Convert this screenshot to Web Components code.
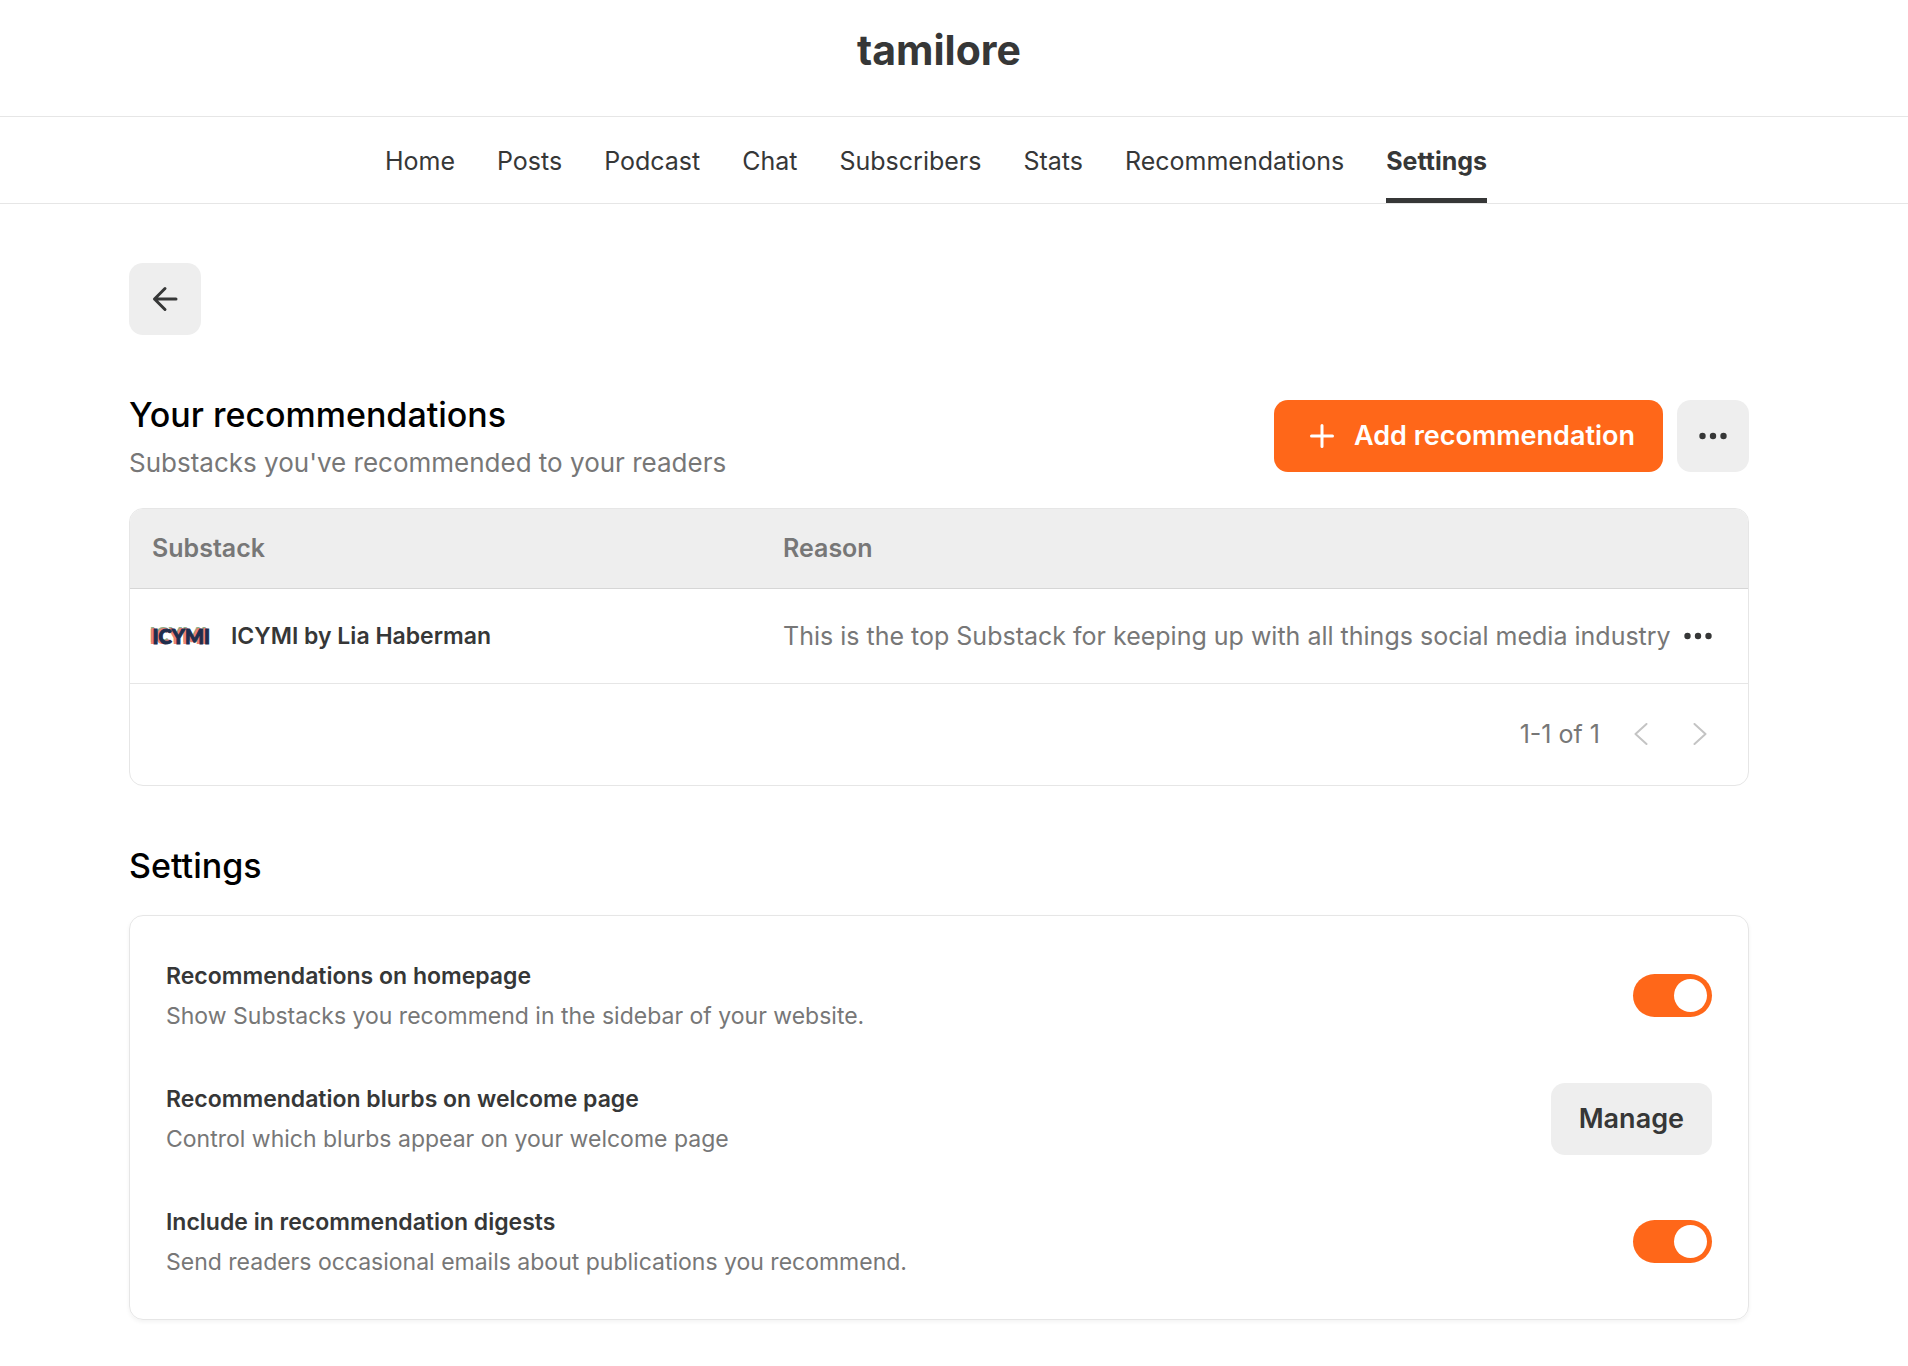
<!DOCTYPE html>
<html lang="en">
<head>
<meta charset="utf-8">
<title>Recommendations - tamilore</title>
<style>
  :root {
    --accent: #ff6719;
    --ink: #363737;
    --muted: #777777;
    --surface: #eeeeee;
    --line: #e6e6e6;
    --radius: 14px;
    --gutter: 30px;
  }
  html { background: #ffffff; }
  body {
    margin: 0;
    font-family: Inter, "Liberation Sans", sans-serif;
    font-size: 25px;
    line-height: 32px;
    color: var(--ink);
  }
</style>
</head>
<body>
<app-page>
  <site-header slot="header">tamilore</site-header>
  <site-nav slot="nav">
    <nav-item href="#home">Home</nav-item>
    <nav-item href="#posts">Posts</nav-item>
    <nav-item href="#podcast">Podcast</nav-item>
    <nav-item href="#chat">Chat</nav-item>
    <nav-item href="#subscribers">Subscribers</nav-item>
    <nav-item href="#stats">Stats</nav-item>
    <nav-item href="#recommendations">Recommendations</nav-item>
    <nav-item href="#settings" current>Settings</nav-item>
  </site-nav>
  <ui-button icon="back" label="Back"></ui-button>
  <page-section>
    <span slot="title">Your recommendations</span>
    <span slot="subtitle">Substacks you've recommended to your readers</span>
    <ui-button slot="actions" icon="plus" variant="primary">Add recommendation</ui-button>
    <ui-button slot="actions" icon="dots" label="More options"></ui-button>
    <recommendation-table></recommendation-table>
  </page-section>
  <page-section>
    <span slot="title">Settings</span>
    <settings-card>
      <setting-row toggle>
        <span slot="name">Recommendations on homepage</span>
        <span slot="description">Show Substacks you recommend in the sidebar of your website.</span>
      </setting-row>
      <setting-row>
        <span slot="name">Recommendation blurbs on welcome page</span>
        <span slot="description">Control which blurbs appear on your welcome page</span>
        <ui-button slot="control">Manage</ui-button>
      </setting-row>
      <setting-row toggle>
        <span slot="name">Include in recommendation digests</span>
        <span slot="description">Send readers occasional emails about publications you recommend.</span>
      </setting-row>
    </settings-card>
  </page-section>
</app-page>

<script>
const ICONS = {
  back: '<svg width="26" height="26" viewBox="0 0 26 26" fill="none" stroke="currentColor" stroke-width="3" stroke-linecap="round" stroke-linejoin="round"><path d="M24 13H2.500M13 2.500 2.500 13 13 23.500"/></svg>',
  plus: '<svg width="24" height="24" viewBox="0 0 24 24" fill="none" stroke="currentColor" stroke-width="3" stroke-linecap="round"><path d="M12 1.500v21M1.500 12h21"/></svg>',
  dots: '<svg width="28" height="8" viewBox="0 0 28 8" fill="currentColor"><circle cx="3.500" cy="4" r="3.200"/><circle cx="14" cy="4" r="3.200"/><circle cx="24.500" cy="4" r="3.200"/></svg>',
  prev: '<svg width="14" height="22" viewBox="0 0 14 22" fill="none" stroke="currentColor" stroke-width="2" stroke-linecap="round" stroke-linejoin="round"><path d="M12.500 1 1.500 11l11 10"/></svg>',
  next: '<svg width="14" height="22" viewBox="0 0 14 22" fill="none" stroke="currentColor" stroke-width="2" stroke-linecap="round" stroke-linejoin="round"><path d="M1.500 1 12.500 11 1.500 21"/></svg>'
};

function define(name, render) {
  customElements.define(name, class extends HTMLElement {
    connectedCallback() {
      if (this.shadowRoot) return;
      this.attachShadow({ mode: 'open' }).innerHTML =
        '<style>*{box-sizing:border-box}svg{display:block;flex:none}button{font:inherit;color:inherit;cursor:pointer}</style>' + render(this);
    }
  });
}

define('app-page', () => `
  <style>
    :host { display: block; }
    main {
      display: flex; flex-direction: column; align-items: stretch;
      max-width: 1620px;
      margin: 0 auto;
      padding: 59px 0 40px;
    }
    .wrap { padding: 0 calc(var(--gutter) + 24px) 0 24px; }
  </style>
  <slot name="header"></slot>
  <slot name="nav"></slot>
  <div class="wrap"><main><slot></slot></main></div>`);

define('site-header', () => `
  <style>
    :host { display: block; border-bottom: 1px solid var(--line); }
    header { display: flex; justify-content: center; padding: 26px var(--gutter) 42px 0; }
    h1 { margin: 0; font-size: 41px; line-height: 48px; font-weight: 700; }
  </style>
  <header><h1><slot></slot></h1></header>`);

define('site-nav', () => `
  <style>
    :host { display: block; border-bottom: 1px solid var(--line); }
    nav { display: flex; justify-content: center; gap: 42px; padding-right: 36px; }
  </style>
  <nav aria-label="Main"><slot></slot></nav>`);

define('nav-item', el => {
  const current = el.hasAttribute('current');
  return `
  <style>
    :host { display: block; }
    a { display: block; padding: 28px 0 21px; border-bottom: 5px solid transparent; color: inherit; text-decoration: none; }
    a[aria-current] { font-weight: 700; border-color: var(--ink); }
  </style>
  <a href="${el.getAttribute('href')}" ${current ? 'aria-current="page"' : ''}><slot></slot></a>`;
});

define('ui-button', el => {
  const label = el.getAttribute('label');
  const icon = ICONS[el.getAttribute('icon')] || '';
  return `
  <style>
    :host { display: flex; }
    button {
      display: flex; align-items: center; justify-content: center; gap: 20px;
      height: 72px; min-width: 72px; padding: 0 28px;
      border: 0; border-radius: var(--radius);
      background: var(--surface); color: var(--ink);
      font-size: 27px; font-weight: 600; white-space: nowrap;
    }
    button[aria-label] { padding: 0; }
    :host([variant="primary"]) button { background: var(--accent); color: #ffffff; padding: 0 28px 0 36px; }
  </style>
  <button type="button" ${label ? `aria-label="${label}"` : ''}>${icon}${label ? '' : '<slot></slot>'}</button>`;
});

define('page-section', el => `
  <style>
    :host { display: block; margin-top: 56px; }
    .head { display: flex; justify-content: space-between; align-items: flex-start; padding-bottom: 25px; }
    h2 { margin: 0; font-size: 34px; line-height: 48px; font-weight: 500; color: #000000; }
    p { margin: 0; padding: 6px 0 3px; font-size: 26px; line-height: 35px; color: var(--muted); }
    .actions { display: flex; gap: 14px; padding-top: 9px; }
  </style>
  <section>
    <div class="head">
      <div>
        <h2><slot name="title"></slot></h2>
        ${el.querySelector('[slot="subtitle"]') ? '<p><slot name="subtitle"></slot></p>' : ''}
      </div>
      ${el.querySelector('[slot="actions"]') ? '<div class="actions"><slot name="actions"></slot></div>' : ''}
    </div>
    <slot></slot>
  </section>`);

define('publication-logo', () => `
  <style>
    :host { display: flex; justify-content: flex-end; width: 58px; flex: none; }
    span {
      font: 900 20px/20px Lato, sans-serif; color: #1f2e4d; white-space: nowrap;
      -webkit-text-stroke: 1px #1f2e4d;
      text-shadow: -2px -1px #ee8375, -3px 0 #ee8375, -3px -2px #8fae8c;
    }
  </style>
  <span><slot></slot></span>`);

define('recommendation-table', () => `
  <style>
    :host { display: block; border: 1px solid var(--line); border-radius: var(--radius); overflow: hidden; }
    table { width: 100%; border-collapse: collapse; table-layout: fixed; }
    th, td { padding: 0 0 0 22px; text-align: left; white-space: nowrap; }
    th { height: 79px; background: var(--surface); color: var(--muted); font-weight: 600; border-bottom: 1px solid #d6d6d6; }
    td { height: 95px; border-bottom: 1px solid var(--line); }
    th:first-child { width: 39%; }
    th:last-child { width: 72px; }
    td:last-child { padding: 0 36px 0 0; }
    .pub { display: flex; align-items: center; gap: 21px; font-size: 23px; font-weight: 600; }
    .reason { color: var(--muted); }
    button { display: flex; align-items: center; height: 40px; margin-left: auto; padding: 0; border: 0; background: none; }
    footer { display: flex; align-items: center; justify-content: flex-end; height: 101px; padding-right: 41px; color: var(--muted); }
    footer button { color: #c4c4c4; }
    footer div { display: flex; gap: 45px; margin-left: 34px; }
  </style>
  <table>
    <thead><tr><th scope="col">Substack</th><th scope="col">Reason</th><th></th></tr></thead>
    <tbody><tr>
      <td><div class="pub"><publication-logo>ICYMI</publication-logo><span>ICYMI by Lia Haberman</span></div></td>
      <td class="reason">This is the top Substack for keeping up with all things social media industry</td>
      <td><button type="button" aria-label="Row options">${ICONS.dots}</button></td>
    </tr></tbody>
  </table>
  <footer>
    <span>1-1 of 1</span>
    <div>
      <button type="button" aria-label="Previous page" disabled>${ICONS.prev}</button>
      <button type="button" aria-label="Next page" disabled>${ICONS.next}</button>
    </div>
  </footer>`);

define('settings-card', () => `
  <style>
    :host {
      display: flex; flex-direction: column; gap: 51px;
      padding: 44px 36px 41px;
      border: 1px solid var(--line); border-radius: var(--radius);
      box-shadow: 0 2px 4px rgba(0, 0, 0, 0.05);
    }
  </style>
  <slot></slot>`);

define('setting-row', el => `
  <style>
    :host { display: block; }
    .row { display: flex; align-items: center; justify-content: space-between; min-height: 72px; }
    .name { display: block; font-size: 23px; line-height: 32px; font-weight: 600; }
    .description { font-size: 23px; line-height: 32px; padding-top: 8px; color: var(--muted); }
    input {
      appearance: none; display: flex; align-items: center; justify-content: flex-end;
      width: 79px; height: 43px; margin: 0; padding: 5px;
      border-radius: 22px; background: #cccccc; cursor: pointer;
    }
    input::before { content: ""; width: 33px; height: 33px; border-radius: 50%; background: #ffffff; }
    input:checked { background: var(--accent); }
    input:not(:checked) { justify-content: flex-start; }
  </style>
  <div class="row">
    <div>
      ${el.hasAttribute('toggle')
        ? '<label class="name" for="toggle"><slot name="name"></slot></label>'
        : '<div class="name"><slot name="name"></slot></div>'}
      <div class="description"><slot name="description"></slot></div>
    </div>
    ${el.hasAttribute('toggle')
      ? '<input id="toggle" type="checkbox" role="switch" checked>'
      : '<slot name="control"></slot>'}
  </div>`);
</script>
</body>
</html>
